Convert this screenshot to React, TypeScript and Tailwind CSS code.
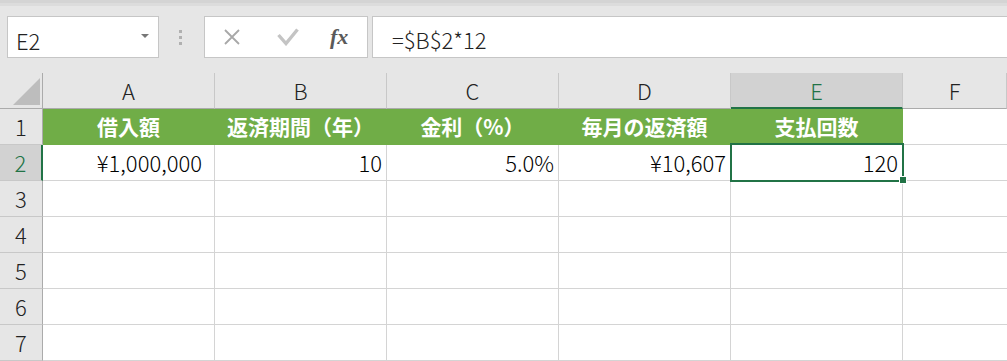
import React from "react";

const COLS = ["A", "B", "C", "D", "E", "F"];

function HeaderCell({ label, selected, last }: { label: string; selected?: boolean; last?: boolean }) {
  const base = "h-full flex items-center justify-center text-[22px] font-light border-r border-[#c8c8c8] ";
  const w = last ? "flex-1 " : "w-[172px] shrink-0 ";
  const sel = selected
    ? "bg-[#d2d2d2] text-[#217346] border-b-2 border-b-[#217346]"
    : "bg-[#e6e6e6] text-[#222222] border-b border-b-[#ababab]";
  return <div className={base + w + sel}>{label}</div>;
}

function RowHeader({ n, selected }: { n: number; selected?: boolean }) {
  return selected ? (
    <div className="w-[43px] shrink-0 h-full flex items-center justify-center text-[22px] font-light bg-[#d2d2d2] text-[#217346] border-b border-b-[#c8c8c8] border-r-2 border-r-[#217346]">
      {n}
    </div>
  ) : (
    <div className="w-[43px] shrink-0 h-full flex items-center justify-center text-[22px] font-light bg-[#e6e6e6] text-[#222222] border-b border-b-[#c8c8c8] border-r border-r-[#ababab]">
      {n}
    </div>
  );
}

const headers = ["借入額", "返済期間（年）", "金利（%）", "毎月の返済額", "支払回数"];
const values = ["¥1,000,000", "10", "5.0%", "¥10,607", "120"];

export default function App() {
  return (
    <div className="w-[1007px] h-[361px] overflow-hidden bg-[#e6e6e6] text-black font-['Noto_Sans_CJK_JP',sans-serif]">
      <div className="h-[3px] bg-[#d4d4d4]" />
      <div className="h-[3px] bg-[#dcdcdc]" />

      {/* formula bar */}
      <div className="mt-[10px] flex h-[42px] pl-[7px]">
        <div className="w-[152px] h-full shrink-0 bg-white border border-[#c6c6c6] flex items-center justify-between pl-[8px] pr-[9px]">
          <span className="text-[22px] font-light leading-none text-[#222222] pt-[5px]">E2</span>
          <svg width="8" height="4" viewBox="0 0 8 4" className="mb-[3px]">
            <polygon points="0,0 8,0 4,4" fill="#777777" />
          </svg>
        </div>
        <div className="w-[45px] shrink-0 h-full flex flex-col items-center justify-center gap-[3px] pr-[2px]">
          <div className="w-[3px] h-[3px] bg-[#b0b0b0]" />
          <div className="w-[3px] h-[3px] bg-[#b0b0b0]" />
          <div className="w-[3px] h-[3px] bg-[#b0b0b0]" />
        </div>
        <div className="w-[164px] h-full shrink-0 bg-white border border-[#c6c6c6] flex items-center pl-[18px]">
          <svg width="18" height="18" viewBox="0 0 18 18">
            <path d="M2 2 L16 16 M16 2 L2 16" stroke="#a8a8a8" strokeWidth="1.8" fill="none" />
          </svg>
          <svg width="22" height="18" viewBox="0 0 22 18" className="ml-[36px]">
            <polyline points="1.5,7 9,15.5 20.5,1.5" stroke="#c4c4c4" strokeWidth="3.4" fill="none" />
          </svg>
          <span className="ml-[31px] text-[22px] italic font-bold text-[#5a5a5a] font-['Liberation_Serif',serif] leading-none">
            fx
          </span>
        </div>
        <div className="ml-[4px] flex-1 h-full bg-white border border-[#c6c6c6] border-r-0 flex items-center pl-[19px]">
          <span className="text-[22px] font-light leading-none text-[#222222] pt-[3px]">=$B$2*12</span>
        </div>
      </div>

      {/* grid */}
      <div className="mt-[15px] bg-white">
        {/* column headers */}
        <div className="flex h-[36px]">
          <div className="w-[43px] shrink-0 h-full bg-[#e6e6e6] border-r border-r-[#ababab] border-b border-b-[#ababab] flex items-end justify-end pr-[2px] pb-[3px]">
            <svg width="27" height="27" viewBox="0 0 27 27">
              <polygon points="27,0 27,27 0,27" fill="#bdbdbd" />
            </svg>
          </div>
          {COLS.map((c, i) => (
            <HeaderCell key={c} label={c} selected={c === "E"} last={i === COLS.length - 1} />
          ))}
        </div>

        {/* row 1 */}
        <div className="flex h-[36px]">
          <RowHeader n={1} />
          {headers.map((h) => (
            <div
              key={h}
              className="w-[172px] shrink-0 h-full bg-[#70ad47] border-r border-b border-[#70ad47] flex items-center justify-center text-white font-bold text-[21px]"
            >
              {h}
            </div>
          ))}
          <div className="flex-1 h-full border-b border-[#d4d4d4]" />
        </div>

        {/* row 2 */}
        <div className="flex h-[36px]">
          <RowHeader n={2} selected />
          {values.map((v, i) => (
            <div
              key={i}
              className={
                "relative w-[172px] shrink-0 h-full border-r border-b border-[#d4d4d4] flex items-center justify-end text-[22px] font-light " +
                (i === 0 ? "pr-[12px]" : "pr-[4px]")
              }
            >
              {v}
              {i === 4 && (
                <div className="absolute left-[-1px] top-[-2px] w-[174px] h-[39px] border-2 border-[#217346] pointer-events-none">
                  <div className="absolute left-[167px] top-[31px] w-[8px] h-[8px] bg-[#217346] border border-white" />
                </div>
              )}
            </div>
          ))}
          <div className="flex-1 h-full border-b border-[#d4d4d4]" />
        </div>

        {[3, 4, 5, 6, 7].map((n) => (
          <div key={n} className="flex h-[36px]">
            <RowHeader n={n} />
            {values.map((_, i) => (
              <div key={i} className="w-[172px] shrink-0 h-full border-r border-b border-[#d4d4d4]" />
            ))}
            <div className="flex-1 h-full border-b border-[#d4d4d4]" />
          </div>
        ))}
      </div>
    </div>
  );
}
